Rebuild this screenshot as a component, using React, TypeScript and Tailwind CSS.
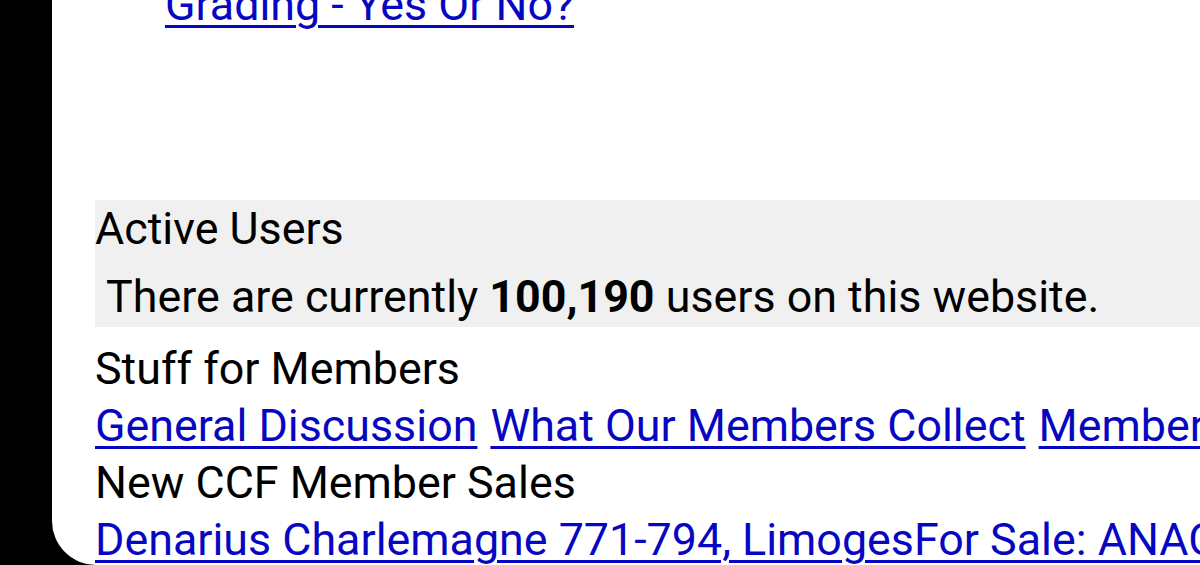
import React from 'react';

const link = 'text-[#0707c2] underline decoration-[3px] underline-offset-[5px]';

const App = () => {
  return <div className="w-[1200px] h-[565px] bg-black overflow-hidden" style={{ fontFamily: 'Roboto, "Noto Sans", sans-serif' }}>
      <div className="ml-[52px] h-full bg-white rounded-bl-[44px] overflow-hidden text-[44.8px] leading-[57px] text-black whitespace-nowrap">
        {/* previous topic, scrolled almost out of view */}
        <div className="-mt-[24px] pl-[113px] h-[224px]">
          <a href="#" className={link}>Grading - Yes Or No?</a>
        </div>

        <div className="ml-[43px] bg-[#f0f0f0] pb-[2px]">
          <div>Active Users</div>
          <div className="pt-[11px]">&nbsp;There are currently <b>100,190</b> users on this website.</div>
        </div>

        <div className="pl-[43px] pt-[13px]">
          <div>Stuff for Members</div>
          <div className="flex gap-[13px]">
            <a href="#" className={link}>General Discussion</a>
            <a href="#" className={link}>What Our Members Collect</a>
            <a href="#" className={link}>Member Articles</a>
          </div>
          <div>New CCF Member Sales</div>
          <div>
            <a href="#" className={link}>Denarius Charlemagne 771-794, Limoges</a>
            <a href="#" className={link}>For Sale: ANACS MS63 Morgan</a>
          </div>
        </div>
      </div>
    </div>;
};

export default App;
